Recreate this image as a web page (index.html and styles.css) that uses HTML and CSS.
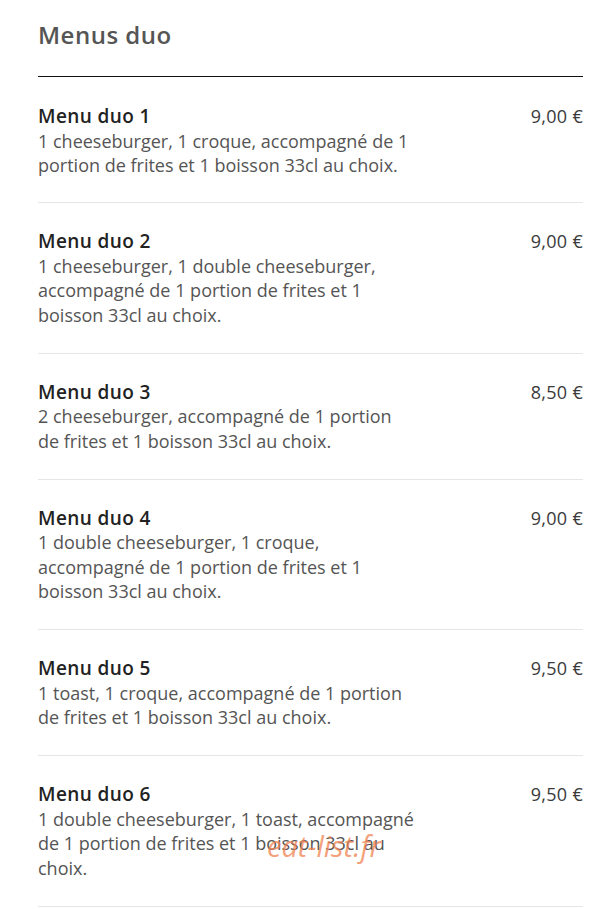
FILE: index.html
```html
<html lang="fr">
<head>
    <meta charset="UTF-8">
    <meta name="viewport" content="width=device-width, initial-scale=1.0">
    <title>Menus duo</title>

    <link rel="stylesheet" href="styles.css">
</head>
<body>
    <section class='menu'>
        <h2>Menus duo</h2>

        <div class='item first'>
            <div class='info'>
                <h3>Menu duo 1</h3>
                <p>1 cheeseburger, 1 croque, accompagné de 1 portion de frites et 1 boisson 33cl au choix.</p>
            </div>
            <span class='price'>9,00 €</span>
        </div>
        <div class='item'>
            <div class='info'>
                <h3>Menu duo 2</h3>
                <p>1 cheeseburger, 1 double cheeseburger, accompagné de 1 portion de frites et 1 boisson 33cl au choix.</p>
            </div>
            <span class='price'>9,00 €</span>
        </div>
        <div class='item'>
            <div class='info'>
                <h3>Menu duo 3</h3>
                <p>2 cheeseburger, accompagné de 1 portion de frites et 1 boisson 33cl au choix.</p>
            </div>
            <span class='price'>8,50 €</span>
        </div>
        <div class='item'>
            <div class='info'>
                <h3>Menu duo 4</h3>
                <p>1 double cheeseburger, 1 croque, accompagné de 1 portion de frites et 1 boisson 33cl au choix.</p>
            </div>
            <span class='price'>9,00 €</span>
        </div>
        <div class='item'>
            <div class='info'>
                <h3>Menu duo 5</h3>
                <p>1 toast, 1 croque, accompagné de 1 portion de frites et 1 boisson 33cl au choix.</p>
            </div>
            <span class='price'>9,50 €</span>
        </div>
        <div class='item'>
            <div class='info'>
                <h3>Menu duo 6</h3>
                <p>1 double cheeseburger, 1 toast, accompagné de 1 portion de frites et 1 boisson 33cl au choix.</p>
            </div>
            <span class='price'>9,50 €</span>
            <span class='mark'>eat-list.fr</span>
        </div>
    </section>
</body>
</html>
```

FILE: styles.css
```css
body{
    margin: 0;
    background: #fff;
    font-family: 'Open Sans', 'Noto Sans', sans-serif;
}
.menu{
    padding: 19px 31px 0 38px;
}
h2{
    margin: 0;
    padding-bottom: 25px;
    font-size: 24px;
    line-height: 32px;
    font-weight: 600;
    letter-spacing: 0.5px;
    color: #555;
    border-bottom: 1px solid #111;
}
.item{
    display: flex;
    justify-content: space-between;
    align-items: flex-start;
    padding: 26px 0 25.5px;
    border-bottom: 1px solid #e6e6e6;
    position: relative;
}
.item.first{
    padding-top: 27px;
    padding-bottom: 24.5px;
}
.info{
    width: 377px;
}
h3{
    margin: 0;
    font-size: 19px;
    line-height: 24.5px;
    font-weight: 600;
    letter-spacing: 0.4px;
    color: #222;
}
p{
    margin: 0;
    font-size: 18px;
    line-height: 24.5px;
    color: #555;
}
.price{
    font-size: 18px;
    line-height: 24.5px;
    letter-spacing: 0.3px;
    color: #3a3a3a;
}
.mark{
    position: absolute;
    left: 229px;
    top: 70px;
    font-size: 29px;
    font-style: italic;
    color: rgba(240, 130, 80, 0.75);
}
```
